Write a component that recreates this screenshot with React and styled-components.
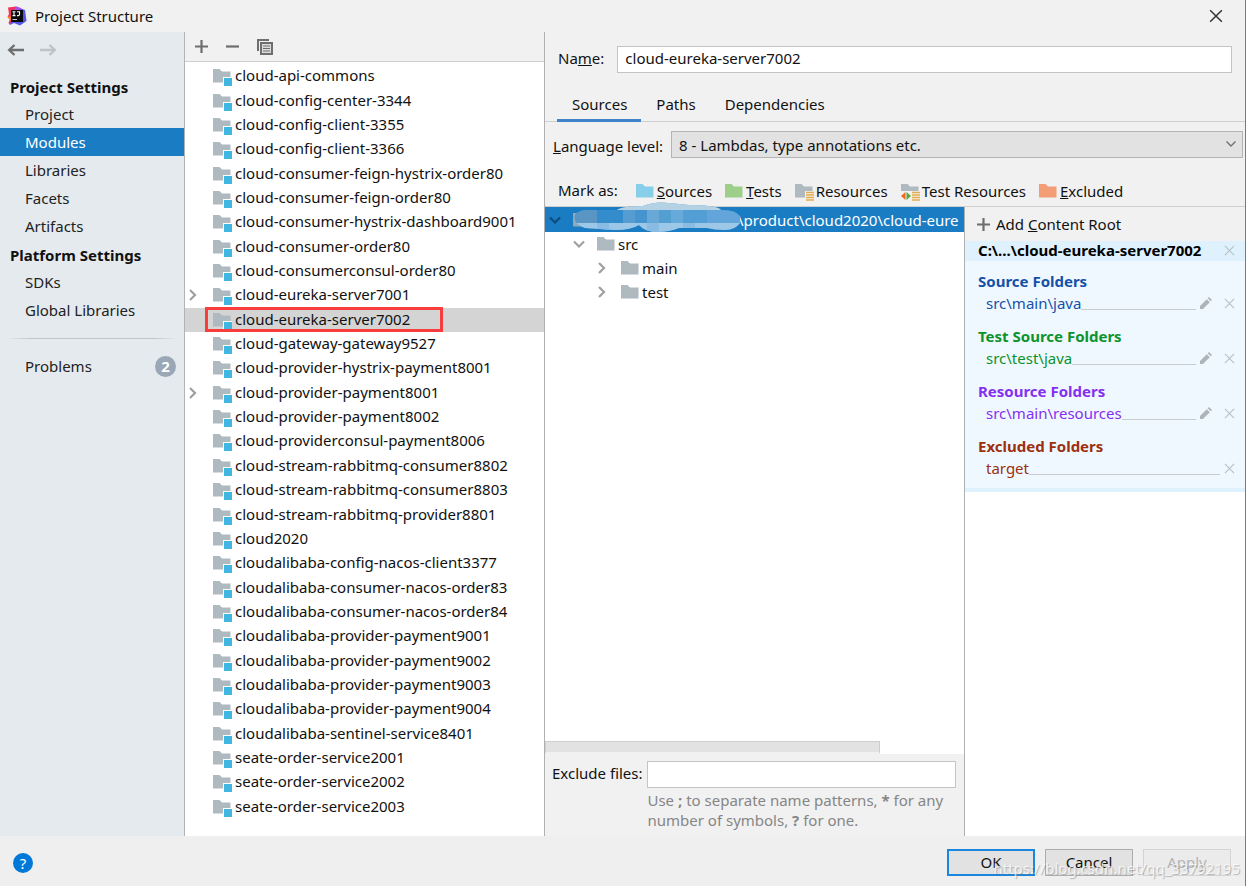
import React from 'react';
import styled, { createGlobalStyle } from 'styled-components';

const GlobalStyle = createGlobalStyle`
  * {
    box-sizing: border-box;
  }
  body {
    margin: 0;
    background: #fff;
    color: #111;
    font-family: 'Noto Sans', 'Open Sans', sans-serif;
    font-size: 15px;
    line-height: 20px;
  }
  button, input, select {
    font: inherit;
    color: inherit;
    margin: 0;
    border-radius: 0;
  }
  ul {
    list-style: none;
    margin: 0;
    padding: 0;
  }
`;

const settings = [
  {
    title: 'Project Settings',
    items: ['Project', 'Modules', 'Libraries', 'Facets', 'Artifacts'],
  },
  { title: 'Platform Settings', items: ['SDKs', 'Global Libraries'] },
];

const modules = [
  'cloud-api-commons',
  'cloud-config-center-3344',
  'cloud-config-client-3355',
  'cloud-config-client-3366',
  'cloud-consumer-feign-hystrix-order80',
  'cloud-consumer-feign-order80',
  'cloud-consumer-hystrix-dashboard9001',
  'cloud-consumer-order80',
  'cloud-consumerconsul-order80',
  'cloud-eureka-server7001',
  'cloud-eureka-server7002',
  'cloud-gateway-gateway9527',
  'cloud-provider-hystrix-payment8001',
  'cloud-provider-payment8001',
  'cloud-provider-payment8002',
  'cloud-providerconsul-payment8006',
  'cloud-stream-rabbitmq-consumer8802',
  'cloud-stream-rabbitmq-consumer8803',
  'cloud-stream-rabbitmq-provider8801',
  'cloud2020',
  'cloudalibaba-config-nacos-client3377',
  'cloudalibaba-consumer-nacos-order83',
  'cloudalibaba-consumer-nacos-order84',
  'cloudalibaba-provider-payment9001',
  'cloudalibaba-provider-payment9002',
  'cloudalibaba-provider-payment9003',
  'cloudalibaba-provider-payment9004',
  'cloudalibaba-sentinel-service8401',
  'seate-order-service2001',
  'seate-order-service2002',
  'seate-order-service2003',
];
const expandable = ['cloud-eureka-server7001', 'cloud-provider-payment8001'];
const current = 'cloud-eureka-server7002';

const marks = [
  { kind: 'sources', key: 'S', rest: 'ources', color: '#87cfe8' },
  { kind: 'tests', key: 'T', rest: 'ests', color: '#9dcf8a' },
  { kind: 'resources', key: '', rest: 'Resources', color: '#aeb9c0' },
  { kind: 'testResources', key: '', rest: 'Test Resources', color: '#aeb9c0' },
  { kind: 'excluded', key: 'E', rest: 'xcluded', color: '#f39d76' },
];

const roots = [
  { title: 'Source Folders', path: 'src\\main\\java', color: '#1551a8', editable: true },
  { title: 'Test Source Folders', path: 'src\\test\\java', color: '#0c932c', editable: true },
  { title: 'Resource Folders', path: 'src\\main\\resources', color: '#8430f0', editable: true },
  { title: 'Excluded Folders', path: 'target', color: '#9c3010', editable: false },
];

// icons

const IdeaLogo = () => (
  <svg width="20" height="20" viewBox="0 0 20 20">
    <path d="M1 1.5 9 0.5 11 9 3 19 1.5 17 3 13 0.5 11 2 8Z" fill="#f5325b" />
    <path d="M0.5 11 3.5 10 5 15 3 14Z" fill="#fc801d" />
    <path d="M9 0.5 18 4 19.5 15 13 19.5 7 17 3 19 5 12Z" fill="#5458ea" />
    <path d="M9 0.5 14 2 12 5 7 4Z" fill="#b04be0" />
    <rect x="4" y="4" width="12" height="12" fill="#0a0a0a" />
    <path d="M5.5 5.7H8.5M7 5.7V9.6M5.5 9.6H8.5M10 5.7H12.5V8.6Q12.5 9.7 10 9.6" stroke="#fff" strokeWidth="1.1" fill="none" />
    <path d="M5.5 13.5H10" stroke="#ccc" strokeWidth="1" />
  </svg>
);

const Arrow = ({ back }) => (
  <svg width="18" height="14" viewBox="0 0 18 14" fill="none" stroke={back ? '#6e6e6e' : '#c0c3c5'} strokeWidth="2.4">
    {back ? <path d="M17 7H2M7.5 2 2.2 7 7.5 12" /> : <path d="M1 7H16M10.5 2 15.8 7 10.5 12" />}
  </svg>
);

const Plus = () => (
  <svg width="13" height="13" viewBox="0 0 13 13" stroke="#6e6e6e" strokeWidth="2.2">
    <path d="M6.5 0V13M0 6.5H13" />
  </svg>
);

const Minus = () => (
  <svg width="13" height="13" viewBox="0 0 13 13" stroke="#6e6e6e" strokeWidth="2.2">
    <path d="M0 6.5H13" />
  </svg>
);

const Copy = () => (
  <svg width="16" height="16" viewBox="0 0 16 16" fill="none" stroke="#6e6e6e">
    <path d="M1 12V1H12" strokeWidth="2" />
    <rect x="4" y="4" width="11" height="11" fill="#dcdcdc" strokeWidth="2" />
    <path d="M6 7H13M6 9.5H13M6 12H13" strokeWidth="1" />
  </svg>
);

const Chevron = ({ open, color = '#a0a0a0' }) => (
  <svg width="12" height="12" viewBox="0 0 12 12" fill="none" stroke={color} strokeWidth="2.2">
    {open ? <path d="M1 3.5 6 8.5 11 3.5" /> : <path d="M2 1 7 6 2 11" />}
  </svg>
);

const ThinChevron = () => (
  <svg width="12" height="12" viewBox="0 0 12 12" fill="none" stroke="#707070" strokeWidth="1.4">
    <path d="M1.5 2.5 6 7 10.5 2.5" />
  </svg>
);

const Cross = ({ size = 11, color = '#b9c2c8', width = 1.3 }) => (
  <svg width={size} height={size} viewBox="0 0 12 12" stroke={color} strokeWidth={width}>
    <path d="M1 1 11 11M11 1 1 11" />
  </svg>
);

const Pencil = () => (
  <svg width="12" height="12" viewBox="0 0 12 12" fill="#aeb5b9">
    <path d="M0 12V9L6.8 2.2 9.8 5.2 3 12Z" />
    <path d="M7.7 1.3 9 0 12 3 10.7 4.3Z" />
  </svg>
);

const Folder = ({ kind, color = '#aeb9c0' }) => (
  <svg width="19" height="20" viewBox="0 -2 19 20">
    <path d="M0 1H6.5L9 3.5H17.5V14.5H0Z" fill={color} />
    {kind === 'module' && (
      <>
        <rect x="10" y="9" width="9" height="9" fill="#fff" />
        <rect x="11" y="10" width="8" height="8" fill="#40b6e0" />
      </>
    )}
    {(kind === 'resources' || kind === 'testResources') && (
      <>
        <rect x="10" y="8" width="9" height="10" fill="#f1f1f1" />
        <path d="M11 9.5H19M11 12H19M11 14.5H19M11 17H19" stroke="#e2ae4c" strokeWidth="1.4" />
      </>
    )}
    {kind === 'testResources' && (
      <>
        <path d="M0 8H10V18H0Z" fill="#f1f1f1" />
        <path d="M4.5 9V17L0 13Z" fill="#f26522" />
        <path d="M5.5 9V17L10 13Z" fill="#59a83c" />
      </>
    )}
  </svg>
);

// scribbled-out part of the root path
const Smudge = () => (
  <SmudgeSvg width="168" height="32" viewBox="0 0 168 32">
    <clipPath id="smudge">
      <path d="M2 13Q6 8 14 8H44Q50 4 70 4Q82-1 96 1L116 3Q144 3 148 8Q164 8 167 15V21Q162 28 152 28Q142 28 134 26H106Q96 30 84 30Q72 30 66 23Q58 28 42 28L12 26Q0 22 2 13Z" />
    </clipPath>
    <g clipPath="url(#smudge)">
      <rect width="168" height="32" fill="#539fd2" />
      <path d="M44 0H150V8H44Z" fill="#b5d2e4" />
      <path d="M0 8H24V22H0Z" fill="#5a96c4" />
      <path d="M24 8H50V22H24Z" fill="#358ccd" />
      <path d="M50 8H62V22H50Z" fill="#549cd1" />
      <path d="M62 8H74V22H62Z" fill="#4594cf" />
      <path d="M74 8H86V22H74Z" fill="#67a8d7" />
      <path d="M98 8H110V22H98Z" fill="#66aadb" />
      <path d="M110 8H134V22H110Z" fill="#549ed6" />
      <path d="M134 8H168V22H134Z" fill="#61a5da" />
      <path d="M0 21H168V32H0Z" fill="#9cc7e7" />
      <path d="M24 21H36V32H24ZM74 21H86V32H74ZM110 21H122V32H110Z" fill="#8abce3" />
    </g>
  </SmudgeSvg>
);

export default function App() {
  return (
    <>
      <GlobalStyle />
      <Window>
        <TitleBar>
          <IdeaLogo />
          <Title>Project Structure</Title>
          <IconButton aria-label="Close">
            <Cross size={14} color="#333" width={1.3} />
          </IconButton>
        </TitleBar>

        <Body>
          <Sidebar>
            <NavHistory>
              <IconButton aria-label="Back"><Arrow back /></IconButton>
              <IconButton aria-label="Forward"><Arrow /></IconButton>
            </NavHistory>
            {settings.map((group) => (
              <nav key={group.title}>
                <GroupTitle>{group.title}</GroupTitle>
                {group.items.map((item) => (
                  <NavItem href="#" key={item} $active={item === 'Modules'}>{item}</NavItem>
                ))}
              </nav>
            ))}
            <Divider />
            <NavItem href="#">
              Problems
              <Badge>2</Badge>
            </NavItem>
          </Sidebar>

          <ModulesPane>
            <Toolbar>
              <IconButton aria-label="Add"><Plus /></IconButton>
              <IconButton aria-label="Remove"><Minus /></IconButton>
              <IconButton aria-label="Copy"><Copy /></IconButton>
            </Toolbar>
            <ModuleList>
              {modules.map((name) => (
                <ModuleRow key={name} $active={name === current}>
                  <Toggle>{expandable.includes(name) && <Chevron />}</Toggle>
                  <Folder kind="module" />
                  <ModuleName>{name}</ModuleName>
                  {name === current && <Highlight />}
                </ModuleRow>
              ))}
            </ModuleList>
          </ModulesPane>

          <Details>
            <NameRow>
              <Label htmlFor="name">Na<u>m</u>e:</Label>
              <TextInput id="name" defaultValue={current} />
            </NameRow>
            <Tabs role="tablist">
              <Tab role="tab" aria-selected="true" $active>Sources</Tab>
              <Tab role="tab">Paths</Tab>
              <Tab role="tab">Dependencies</Tab>
            </Tabs>
            <LevelRow>
              <label htmlFor="level"><u>L</u>anguage level:</label>
              <SelectBox>
                <Select id="level">
                  <option>8 - Lambdas, type annotations etc.</option>
                </Select>
                <ThinChevron />
              </SelectBox>
            </LevelRow>
            <MarkRow>
              <MarkLabel>Mark as:</MarkLabel>
              {marks.map((mark) => (
                <MarkButton key={mark.kind}>
                  <Folder kind={mark.kind} color={mark.color} />
                  <span>{mark.key && <u>{mark.key}</u>}{mark.rest}</span>
                </MarkButton>
              ))}
            </MarkRow>

            <Panes>
              <TreePane>
                <Tree>
                  <TreeRow $level={0} $active>
                    <Chevron open color="#0d4a7d" />
                    <Folder color="#8fa9ba" />
                    <Smudge />
                    <RootPath>\product\cloud2020\cloud-eure</RootPath>
                  </TreeRow>
                  <TreeRow $level={1}><Chevron open /><Folder />src</TreeRow>
                  <TreeRow $level={2}><Chevron /><Folder />main</TreeRow>
                  <TreeRow $level={2}><Chevron /><Folder />test</TreeRow>
                </Tree>
                <Scrollbar />
                <ExcludeForm>
                  <Label htmlFor="exclude">Exclude files:</Label>
                  <TextInput id="exclude" />
                  <Hint>
                    Use <b>;</b> to separate name patterns, <b>*</b> for any number of symbols, <b>?</b> for one.
                  </Hint>
                </ExcludeForm>
              </TreePane>

              <RootsPane>
                <AddRoot>
                  <Plus />
                  <span>Add <u>C</u>ontent Root</span>
                </AddRoot>
                <RootCard>
                  <RootHeader>
                    C:\...\cloud-eureka-server7002
                    <IconButton aria-label="Remove root"><Cross /></IconButton>
                  </RootHeader>
                  {roots.map((root) => (
                    <RootSection key={root.title} $color={root.color}>
                      <RootTitle>{root.title}</RootTitle>
                      <RootEntry>
                        {root.path}
                        <Leader />
                        {root.editable && <IconButton aria-label="Edit"><Pencil /></IconButton>}
                        <IconButton aria-label="Remove"><Cross /></IconButton>
                      </RootEntry>
                    </RootSection>
                  ))}
                </RootCard>
              </RootsPane>
            </Panes>
          </Details>
        </Body>

        <Footer>
          <Help aria-label="Help">?</Help>
          <DialogButton $primary>OK</DialogButton>
          <DialogButton>Cancel</DialogButton>
          <DialogButton disabled>Apply</DialogButton>
          <Watermark>https://blog.csdn.net/qq_33792195</Watermark>
        </Footer>
      </Window>
    </>
  );
}

const Window = styled.div`
  display: flex;
  flex-direction: column;
  min-height: 100vh;
  margin-right: 3px;
  border-right: 1px solid #777c7c;
  background: #f1f1f1;
`;

const IconButton = styled.button`
  display: flex;
  align-items: center;
  justify-content: center;
  padding: 0;
  border: none;
  background: none;
`;

const TitleBar = styled.header`
  display: flex;
  align-items: center;
  gap: 8px;
  height: 32px;
  padding: 0 22px 1px 7px;
`;

const Title = styled.span`
  flex: 1;
`;

const Body = styled.main`
  flex: 1;
  display: grid;
  grid-template-columns: 185px 360px 1fr;
`;

const Sidebar = styled.aside`
  background: #e5eaee;
  border-right: 1px solid #b0b4b6;
`;

const NavHistory = styled.div`
  display: flex;
  gap: 14px;
  padding: 11px 7px 15px;
`;

const GroupTitle = styled.div`
  padding: 4px 10px 2px;
  line-height: 22px;
  font-weight: 700;
`;

const NavItem = styled.a`
  display: flex;
  align-items: center;
  justify-content: space-between;
  height: 28px;
  padding: 0 8px 0 25px;
  text-decoration: none;
  color: ${(props) => (props.$active ? '#fff' : '#222')};
  background: ${(props) => (props.$active ? '#1a7dc4' : 'none')};
`;

const Divider = styled.div`
  height: 1px;
  margin: 14px 6px 13px;
  background: linear-gradient(to right, transparent, #c0c4c6 15%, #c0c4c6 85%, transparent);
`;

const Badge = styled.span`
  width: 21px;
  height: 21px;
  border-radius: 50%;
  background: #99a7b7;
  color: #fff;
  font-weight: 700;
  font-size: 15px;
  line-height: 21px;
  text-align: center;
`;

const ModulesPane = styled.section`
  display: flex;
  flex-direction: column;
  background: #fff;
  border-right: 1px solid #b0b0b0;
`;

const Toolbar = styled.div`
  display: flex;
  align-items: center;
  gap: 18px;
  height: 30px;
  padding-left: 10px;
  background: #f1f1f1;
  border-bottom: 1px solid #cfcfcf;
`;

const ModuleList = styled.ul`
  flex: 1;
  display: grid;
  grid-auto-rows: minmax(24px, 1fr);
  padding: 2px 0 17px;
`;

const ModuleRow = styled.li`
  position: relative;
  display: flex;
  align-items: center;
  gap: 3px;
  white-space: nowrap;
  background: ${(props) => (props.$active ? '#d4d4d4' : 'none')};
`;

const ModuleName = styled.span`
  padding-bottom: 2px;
`;

const Toggle = styled.span`
  display: flex;
  width: 25px;
  padding-left: 3px;
`;

const Highlight = styled.span`
  position: absolute;
  left: 20px;
  top: -1px;
  bottom: 0;
  width: 238px;
  border: 3px solid #f93c3c;
`;

const Details = styled.section`
  display: flex;
  flex-direction: column;
  min-width: 0;
`;

const Label = styled.label`
  padding-bottom: 3px;
`;

const TextInput = styled.input`
  flex: 1;
  min-width: 0;
  height: 27px;
  padding: 0 7px 3px;
  border: 1px solid #c4c4c4;
  background: #fff;
`;

const NameRow = styled.div`
  display: flex;
  align-items: center;
  gap: 13px;
  padding: 14px 13px 0 13px;
`;

const Tabs = styled.div`
  display: flex;
  height: 35px;
  margin-top: 14px;
  padding-left: 12px;
  border-bottom: 1px solid #cfcfcf;
`;

const Tab = styled.button`
  height: 35px;
  padding: 2px 14px 0 15px;
  border: none;
  border-bottom: 3px solid ${(props) => (props.$active ? '#4083c9' : 'transparent')};
  background: none;
`;

const LevelRow = styled.div`
  display: flex;
  align-items: center;
  gap: 8px;
  padding: 9px 2px 0 8px;
  > label {
    padding-top: 2px;
  }
`;

const SelectBox = styled.div`
  flex: 1;
  display: grid;
  align-items: center;
  justify-items: end;
  > * {
    grid-area: 1 / 1;
  }
  > svg {
    margin-right: 6px;
    pointer-events: none;
  }
`;

const Select = styled.select`
  appearance: none;
  width: 100%;
  height: 27px;
  padding: 0 7px;
  border: 1px solid #b4b4b4;
  background: #e2e2e2;
`;

const MarkRow = styled.div`
  display: flex;
  align-items: center;
  gap: 13px;
  height: 49px;
  padding: 18px 0 0 13px;
  border-bottom: 1px solid #cfcfcf;
`;

const MarkLabel = styled.span`
  margin-right: 5px;
  padding-bottom: 3px;
`;

const MarkButton = styled.button`
  display: flex;
  align-items: center;
  gap: 2px;
  padding: 0;
  border: none;
  background: none;
  white-space: nowrap;
`;

const Panes = styled.div`
  flex: 1;
  display: grid;
  grid-template-columns: 1fr 281px;
`;

const TreePane = styled.div`
  display: flex;
  flex-direction: column;
  min-width: 0;
  background: #fff;
`;

const Tree = styled.ul`
  flex: 1;
`;

const TreeRow = styled.li`
  position: relative;
  display: flex;
  align-items: center;
  height: ${(props) => (props.$active ? 25 : 24)}px;
  padding-left: ${(props) => 4 + props.$level * 24}px;
  color: ${(props) => (props.$active ? '#fff' : '#111')};
  background: ${(props) => (props.$active ? '#1a7dc4' : 'none')};
  > svg + svg {
    margin-left: 12px;
    margin-right: 2px;
  }
`;

const SmudgeSvg = styled.svg`
  position: absolute;
  left: 16px;
  top: -5px;
  z-index: 1;
`;

const RootPath = styled.span`
  flex: 1;
  margin-left: 144px;
  white-space: nowrap;
`;

const Scrollbar = styled.div`
  width: 80%;
  height: 13px;
  background: #e2e2e2;
  border: 1px solid #cdcdcd;
  border-bottom: 2px solid #f1f1f1;
`;

const ExcludeForm = styled.div`
  display: grid;
  grid-template-columns: auto 1fr;
  align-items: center;
  column-gap: 5px;
  padding: 7px 8px 6px 7px;
  background: #f1f1f1;
`;

const Hint = styled.p`
  grid-column: 2;
  margin: 2px 0 0;
  color: #868686;
`;

const RootsPane = styled.div`
  background: #fff;
  border-left: 1px solid #b0b0b0;
`;

const AddRoot = styled.button`
  display: flex;
  align-items: center;
  gap: 6px;
  width: 100%;
  height: 34px;
  padding: 0 12px;
  border: none;
  background: #f1f1f1;
`;

const RootCard = styled.div`
  padding-bottom: 7px;
  background: #f0f8ff;
  border-bottom: 4px solid #def1fd;
`;

const RootHeader = styled.div`
  display: flex;
  align-items: center;
  justify-content: space-between;
  height: 20px;
  padding: 0 10px 2px 13px;
  background: #def1fd;
  color: #000;
  font-weight: 700;
`;

const RootSection = styled.section`
  padding: 9px 10px 2px 13px;
  color: ${(props) => props.$color};
`;

const RootTitle = styled.div`
  line-height: 22px;
  font-weight: 700;
`;

const RootEntry = styled.div`
  display: flex;
  align-items: center;
  height: 22px;
  padding-left: 8px;
  button + button {
    margin-left: 12px;
  }
`;

const Leader = styled.span`
  flex: 1;
  height: 14px;
  margin-right: 4px;
  border-bottom: 1px solid #c6cccf;
`;

const Footer = styled.footer`
  position: relative;
  display: flex;
  align-items: center;
  gap: 10px;
  height: 50px;
  padding: 3px 14px 0 13px;
  background: #efefef;
`;

const Help = styled.button`
  width: 20px;
  height: 20px;
  margin-right: auto;
  padding: 0;
  border: none;
  border-radius: 50%;
  background: #0078d7;
  color: #fff;
  line-height: 20px;
`;

const DialogButton = styled.button`
  width: 88px;
  height: 27px;
  padding: 0 0 2px;
  line-height: 20px;
  background: #e2e2e2;
  border: ${(props) => (props.$primary ? '2px solid #1a86de' : '1px solid #adadad')};
  &:disabled {
    color: #b4b4b4;
    background: #ebebeb;
    border-color: #d4d4d4;
  }
`;

const Watermark = styled.span`
  position: absolute;
  right: 5px;
  bottom: 8px;
  color: rgba(255, 255, 255, 0.75);
  text-shadow: 1px 1px 1px rgba(120, 120, 120, 0.5);
  pointer-events: none;
`;
